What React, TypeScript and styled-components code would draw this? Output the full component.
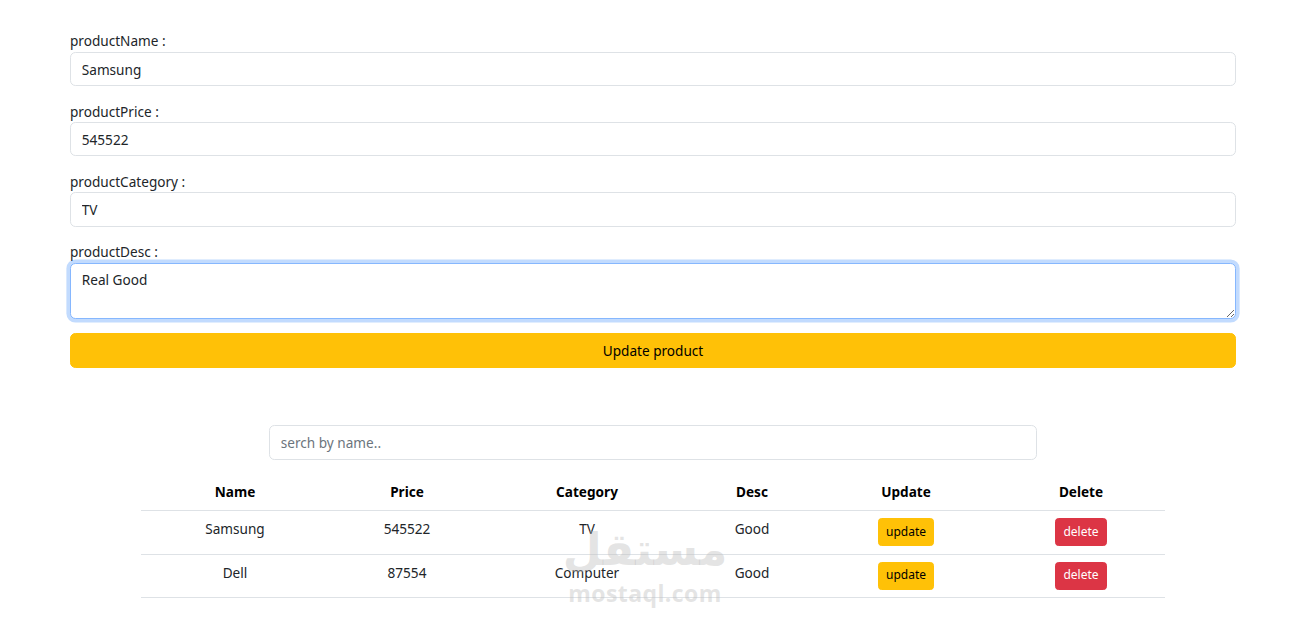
import React, { useEffect, useRef } from "react";
import styled, { createGlobalStyle } from "styled-components";

const Global = createGlobalStyle`
  * { box-sizing: border-box; }
  html, body { margin: 0; padding: 0; background: #fff; }
  body {
    font-family: "Noto Sans", "Open Sans", "Liberation Sans", sans-serif;
    font-size: 14.4px;
    line-height: 1.5;
    color: #212529;
  }
`;

const Page = styled.div`
  position: relative;
  padding: 30.4px 57px 24px 70px;
`;

const Form = styled.form`
  display: flex;
  flex-direction: column;
`;

const Field = styled.div`
  display: flex;
  flex-direction: column;
  margin-bottom: 14.4px;
`;

const Label = styled.label`
  font-size: 13.6px;
  line-height: 21.6px;
  color: #212529;
`;

const Input = styled.input<{ $h?: number }>`
  display: block;
  width: 100%;
  height: ${(p) => p.$h ?? 34.2}px;
  padding: 5.4px 10.8px;
  font-family: inherit;
  font-size: 13.6px;
  line-height: 21.6px;
  color: #212529;
  background: #fff;
  border: 1px solid #dee2e6;
  border-radius: 5.4px;
  outline: none;
  &::placeholder { color: #6c757d; }
`;

const TextArea = styled.textarea<{ $focus?: boolean }>`
  display: block;
  width: 100%;
  height: 56px;
  padding: 5.4px 10.8px;
  font-family: inherit;
  font-size: 13.6px;
  line-height: 21.6px;
  color: #212529;
  background: #fff;
  border: 1px solid ${(p) => (p.$focus ? "#86b7fe" : "#dee2e6")};
  border-radius: 5.4px;
  outline: none;
  box-shadow: ${(p) => (p.$focus ? "0 0 0 3.6px rgba(13,110,253,.25)" : "none")};
  resize: vertical;
  caret-color: #212529;
`;

const WideButton = styled.button`
  width: 100%;
  height: 35px;
  padding: 5.4px 10.8px;
  font-family: inherit;
  font-size: 13.6px;
  line-height: 21.6px;
  color: #000;
  background: #ffc107;
  border: 1px solid #ffc107;
  border-radius: 5.4px;
`;

const SearchWrap = styled.div`
  width: 768px;
  margin: 57px auto 0;
`;

const Table = styled.table`
  width: 1024px;
  margin: 14.4px auto 0;
  border-collapse: collapse;
  table-layout: fixed;
`;

const Th = styled.th<{ $w: number }>`
  width: ${(p) => p.$w}px;
  padding: 7.2px;
  font-size: 13.6px;
  line-height: 21.6px;
  font-weight: 700;
  color: #000;
  text-align: center;
  border-bottom: 1px solid #dee2e6;
`;

const Td = styled.td`
  padding: 7.2px;
  font-size: 13.6px;
  line-height: 21.6px;
  text-align: center;
  vertical-align: top;
  color: #212529;
  border-bottom: 1px solid #dee2e6;
`;

const SmallButton = styled.button<{ $variant: "warning" | "danger" }>`
  height: 27.9px;
  padding: 3.6px 7.2px;
  font-family: inherit;
  font-size: 12px;
  line-height: 18.9px;
  border-radius: 3.6px;
  border: 1px solid ${(p) => (p.$variant === "warning" ? "#ffc107" : "#dc3545")};
  background: ${(p) => (p.$variant === "warning" ? "#ffc107" : "#dc3545")};
  color: ${(p) => (p.$variant === "warning" ? "#000" : "#fff")};
`;

const Watermark = styled.div`
  position: absolute;
  left: 565px;
  top: 521px;
  width: 160px;
  display: flex;
  flex-direction: column;
  align-items: center;
  pointer-events: none;
  color: rgba(190, 190, 190, 0.42);
  font-weight: 700;
`;

const WmArabic = styled.div`
  font-family: "DejaVu Sans", sans-serif;
  font-size: 45px;
  line-height: 58px;
`;

const WmLatin = styled.div`
  font-family: "Open Sans", "Noto Sans", sans-serif;
  font-size: 23px;
  line-height: 28px;
  letter-spacing: 0.4px;
`;

const columns = [
  { title: "Name", w: 188 },
  { title: "Price", w: 156 },
  { title: "Category", w: 204 },
  { title: "Desc", w: 126 },
  { title: "Update", w: 182 },
  { title: "Delete", w: 168 },
];

const products = [
  { name: "Samsung", price: "545522", category: "TV", desc: "Good" },
  { name: "Dell", price: "87554", category: "Computer", desc: "Good" },
];

export default function App() {
  const ref = useRef<HTMLTextAreaElement>(null);
  useEffect(() => {
    if (ref.current) {
      ref.current.focus();
      ref.current.setSelectionRange(5, 5);
    }
  }, []);

  return (
    <>
      <Global />
      <Page>
        <Form onSubmit={(e) => e.preventDefault()}>
          <Field>
            <Label>productName :</Label>
            <Input defaultValue="Samsung" />
          </Field>
          <Field>
            <Label>productPrice :</Label>
            <Input defaultValue="545522" />
          </Field>
          <Field>
            <Label>productCategory :</Label>
            <Input defaultValue="TV" />
          </Field>
          <Field>
            <Label>productDesc :</Label>
            <TextArea ref={ref} $focus defaultValue="Real Good" />
          </Field>
          <WideButton type="submit">Update product</WideButton>
        </Form>

        <SearchWrap>
          <Input $h={35} placeholder="serch by name.." />
        </SearchWrap>

        <Table>
          <thead>
            <tr>
              {columns.map((c) => (
                <Th key={c.title} $w={c.w}>
                  {c.title}
                </Th>
              ))}
            </tr>
          </thead>
          <tbody>
            {products.map((p) => (
              <tr key={p.name}>
                <Td>{p.name}</Td>
                <Td>{p.price}</Td>
                <Td>{p.category}</Td>
                <Td>{p.desc}</Td>
                <Td>
                  <SmallButton $variant="warning">update</SmallButton>
                </Td>
                <Td>
                  <SmallButton $variant="danger">delete</SmallButton>
                </Td>
              </tr>
            ))}
          </tbody>
        </Table>

        <Watermark>
          <WmArabic>مستقل</WmArabic>
          <WmLatin>mostaql.com</WmLatin>
        </Watermark>
      </Page>
    </>
  );
}
